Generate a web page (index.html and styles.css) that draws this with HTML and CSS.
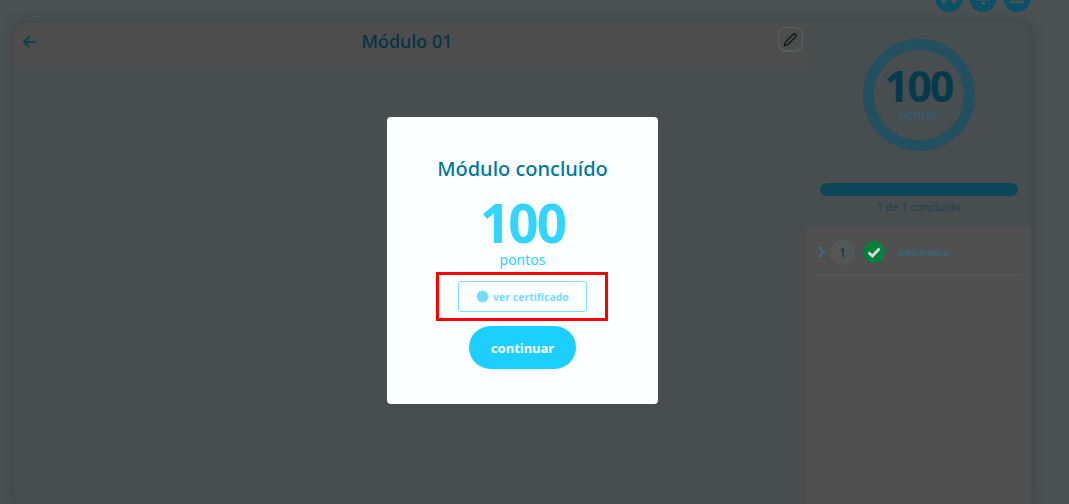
FILE: index.html
```html
<!DOCTYPE html>
<html lang="pt-br">
<head>
  <meta charset="UTF-8">
  <meta name="viewport" content="width=device-width, initial-scale=1.0">
  <title>Módulo 01</title>
  <link rel="stylesheet" href="styles.css">
</head>
<body>
  <div class="topbar">
    <span class="round-btn">
      <svg viewBox="0 0 28 28"><path d="M14 13l-7 6M14 13l7 6" stroke="#4d5252" stroke-width="3.500"/></svg>
    </span>
    <span class="round-btn">
      <svg viewBox="0 0 28 28"><path d="M7 14.500h14v2H7zM12 18h4v2h-4z" fill="#4d5252"/></svg>
    </span>
    <span class="round-btn">
      <svg viewBox="0 0 28 28"><path d="M7 18h14" stroke="#4d5252" stroke-width="2.500"/></svg>
    </span>
  </div>

  <div class="card">
    <main class="content">
      <header class="content-head">
        <svg class="back" viewBox="0 0 14 14"><path d="M13 7H2M7 2L2 7l5 5" fill="none" stroke="#0a4152" stroke-width="1.8" stroke-linecap="round" stroke-linejoin="round"/></svg>
        <h1>Módulo 01</h1>
        <span class="edit-btn">
          <svg viewBox="0 0 18 18"><path d="M2.5 15.5l1-3.5 8.5-8.500c.7-.7 1.800-.7 2.500 0s.7 1.800 0 2.500L6 14.500z" fill="none" stroke="#151919" stroke-width="1.500" stroke-linejoin="round"/></svg>
        </span>
      </header>
    </main>

    <aside class="sidebar">
      <div class="score">
        <div class="ring">
          <strong>100</strong>
          <span>pontos</span>
        </div>
        <div class="bar"></div>
        <p>1 de 1 concluído</p>
      </div>
      <ul class="steps">
        <li>
          <svg class="chevron" viewBox="0 0 9 14"><path d="M1.500 1.500L7 7l-5.500 5.500" fill="none" stroke="#2c6f8a" stroke-width="2"/></svg>
          <span class="num">1</span>
          <svg class="check" viewBox="0 0 22 22"><circle cx="11" cy="11" r="11" fill="#04803a"/><path d="M5.500 11.500l4 3.500 7-7.500" fill="none" stroke="#d3dada" stroke-width="2.800"/></svg>
          <span class="step-name">informativo</span>
        </li>
      </ul>
    </aside>
  </div>

  <div class="overlay">
    <div class="modal">
      <h2>Módulo concluído</h2>
      <div class="points">100</div>
      <div class="points-label">pontos</div>
      <div class="highlight">
        <button class="cert-btn">
          <svg viewBox="0 0 13 13"><polygon points="13,6.5 11.52,7.85 12.13,9.75 10.18,10.18 9.75,12.13 7.85,11.52 6.5,13 5.15,11.52 3.25,12.13 2.82,10.18 .87,9.75 1.48,7.85 0,6.5 1.48,5.15 .87,3.25 2.82,2.82 3.25,.87 5.15,1.48 6.5,0 7.85,1.48 9.75,.87 10.18,2.82 12.13,3.25 11.52,5.15" fill="#6fdcff"/></svg>
          ver certificado
        </button>
      </div>
      <button class="continue-btn">continuar</button>
    </div>
  </div>
</body>
</html>
```

FILE: styles.css
```css
* {
  box-sizing: border-box;
}
html, body {
  height: 100%;
}
body {
  margin: 0;
  overflow: hidden;
  background-color: #4c5151;
  font-family: "Noto Sans", Arial, sans-serif;
  color: #0a3b4b;
}
.topbar {
  display: flex;
  justify-content: flex-end;
  gap: 6px;
  height: 23px;
  padding-right: 38px;
}
.round-btn {
  width: 28px;
  height: 28px;
  margin-top: -16px;
  border-radius: 50%;
  background-color: #0a5066;
}
.round-btn svg {
  display: block;
}
.card {
  display: flex;
  width: 1017px;
  height: 481px;
  margin-left: 14px;
  border-radius: 12px 12px 0 0;
  background-color: #484d4d;
  box-shadow: 0 0 16px rgba(0, 0, 0, 0.2);
  overflow: hidden;
}
.content {
  width: 792px;
}
.content-head {
  display: flex;
  align-items: center;
  justify-content: space-between;
  height: 45px;
  padding: 0 3px 0 8px;
  background-color: #4d4d4d;
}
.back {
  width: 14px;
  height: 14px;
  margin-top: -8px;
}
.content-head h1 {
  margin: -9px 0 0;
  font-size: 18px;
  font-weight: 500;
  color: #063345;
}
.edit-btn {
  width: 25px;
  height: 25px;
  margin-top: -12px;
  padding: 3px;
  border: 1px solid #5c5f5f;
  border-bottom-width: 2px;
  border-radius: 8px;
}
.edit-btn svg {
  display: block;
  width: 17px;
  height: 17px;
}
.sidebar {
  flex: 1;
  background-color: #484d4f;
}
.score {
  height: 203px;
  padding-top: 16px;
  text-align: center;
}
.ring {
  display: flex;
  flex-direction: column;
  align-items: center;
  width: 112px;
  height: 112px;
  margin: 0 auto;
  padding-top: 18px;
  border: 11px solid #22505e;
  border-radius: 50%;
}
.ring strong {
  font-size: 43px;
  line-height: 36px;
  font-weight: 700;
  letter-spacing: -2px;
  color: #06394b;
}
.ring span {
  margin-top: 3px;
  font-size: 12px;
  line-height: 15px;
  color: #2f6275;
}
.bar {
  width: 198px;
  height: 13px;
  margin: 32px auto 0;
  border-radius: 7px;
  background-color: #0c4658;
}
.score p {
  margin: 4px 0 0;
  font-size: 11px;
  line-height: 14px;
  color: #1f3e4a;
}
.steps {
  height: 278px;
  margin: 0;
  padding: 0 9px;
  list-style: none;
  background-color: #505050;
}
.steps li {
  display: flex;
  align-items: center;
  height: 49px;
  padding-top: 4px;
  border-bottom: 1px solid #585a5a;
}
.chevron {
  width: 9px;
  height: 14px;
  margin: 0 4px 0 2px;
}
.num {
  width: 25px;
  height: 25px;
  border-radius: 50%;
  background-color: #525757;
  font-size: 12px;
  font-weight: 500;
  line-height: 25px;
  text-align: center;
  color: #0a3b4b;
}
.check {
  width: 22px;
  height: 22px;
  margin: 0 14px 0 8px;
}
.step-name {
  font-size: 9.5px;
  letter-spacing: -0.2px;
  color: #2c6f8a;
}
.overlay {
  position: fixed;
  inset: 0;
  padding: 117px 0 0 387px;
}
.modal {
  display: flex;
  flex-direction: column;
  align-items: center;
  width: 271px;
  height: 287px;
  padding-top: 37px;
  border-radius: 4px;
  background-color: #fbffff;
}
.modal h2 {
  margin: 0;
  font-size: 20px;
  line-height: 30px;
  font-weight: 500;
  color: #00799c;
}
.points {
  margin-top: 14px;
  font-size: 53px;
  line-height: 50px;
  font-weight: 700;
  letter-spacing: -2px;
  color: #33d4ff;
}
.points-label {
  margin-top: 3px;
  font-size: 14px;
  line-height: 18px;
  color: #33d4ff;
}
.highlight {
  width: 172px;
  height: 49px;
  margin: 3px 1px 0 0;
  padding: 6px 18px 6px 19px;
  border: 3px solid #ff0000;
}
.cert-btn {
  display: flex;
  align-items: center;
  justify-content: center;
  gap: 4px;
  width: 129px;
  height: 31px;
  padding: 0;
  border: 1px solid #7fdfff;
  border-radius: 3px;
  background-color: #fbffff;
  font-family: inherit;
  font-size: 10.5px;
  font-weight: 700;
  color: #77deff;
}
.cert-btn svg {
  width: 13px;
  height: 13px;
}
.continue-btn {
  width: 107px;
  height: 43px;
  margin-top: 5px;
  border: none;
  border-radius: 22px;
  background-color: #1ccfff;
  font-family: inherit;
  font-size: 13px;
  font-weight: 700;
  color: #ffffff;
}
```
